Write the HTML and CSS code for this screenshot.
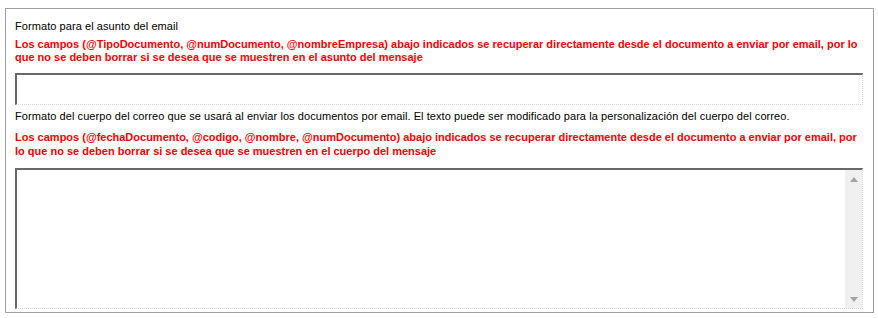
FILE: index.html
```html
<!DOCTYPE html>
<html lang="es">
<head>
  <meta charset="UTF-8" />
  <title>Formato email</title>
  <link rel="stylesheet" href="styles.css">
</head>
<body>

  <!-- Panel -->
  <div class="panel">
    <div class="label">Formato para el asunto del email</div>
    <div class="warning">Los campos (@TipoDocumento, @numDocumento, @nombreEmpresa) abajo indicados se recuperar directamente desde el documento a enviar por email, por lo que no se deben borrar si se desea que se muestren en el asunto del mensaje</div>
    <input type="text" class="field" />

    <div class="label second">Formato del cuerpo del correo que se usará al enviar los documentos por email. El texto puede ser modificado para la personalización del cuerpo del correo.</div>
    <div class="warning wide">Los campos (@fechaDocumento, @codigo, @nombre, @numDocumento) abajo indicados se recuperar directamente desde el documento a enviar por email, por lo que no se deben borrar si se desea que se muestren en el cuerpo del mensaje</div>
    <div class="body-box">
      <textarea class="body-text"></textarea>
      <div class="scroll">
        <span class="arrow up"></span>
        <span class="arrow down"></span>
      </div>
    </div>
  </div>

</body>
</html>
```
FILE: styles.css
```css
body {
  margin: 0;
  padding: 8px 4px 5px 5px;
  background: #fff;
  font-family: 'Liberation Sans', Arial, sans-serif;
}
.panel {
  border: 1px solid #a0a0a0;
  height: 305px;
  box-sizing: border-box;
  padding: 10px 10px 0 9px;
  display: flex;
  flex-direction: column;
}
.label {
  font-size: 11px;
  color: #000;
  line-height: 14px;
  letter-spacing: 0.07px;
}
.label.second {
  margin-top: 4px;
}
.warning {
  font-size: 11px;
  font-weight: bold;
  color: #ff0000;
  line-height: 13px;
  margin-top: 5px;
}
.warning.wide {
  line-height: 14px;
  margin-top: 7px;
}
.field {
  margin: 9px 0 0 0;
  height: 32px;
  width: 100%;
  box-sizing: border-box;
  border-top: 2px solid #696969;
  border-left: 2px solid #696969;
  border-right: 1px dotted #d8d8d8;
  border-bottom: 1px dotted #d8d8d8;
  background: #fff;
  outline: none;
}
.body-box {
  margin-top: 10px;
  height: 138px;
  display: flex;
  border-top: 2px solid #696969;
  border-left: 2px solid #696969;
  border-right: 1px dotted #d8d8d8;
  border-bottom: 1px dotted #d8d8d8;
}
.body-text {
  flex: 1;
  border: none;
  resize: none;
  outline: none;
  padding: 0;
}
.scroll {
  width: 17px;
  background: #f0f0f0;
  display: flex;
  flex-direction: column;
  justify-content: space-between;
  align-items: center;
  padding: 7px 0 6px;
}
.arrow {
  width: 0;
  height: 0;
  border-left: 4px solid transparent;
  border-right: 4px solid transparent;
}
.arrow.up {
  border-bottom: 5px solid #a3a3a3;
}
.arrow.down {
  border-top: 5px solid #a3a3a3;
}
```
